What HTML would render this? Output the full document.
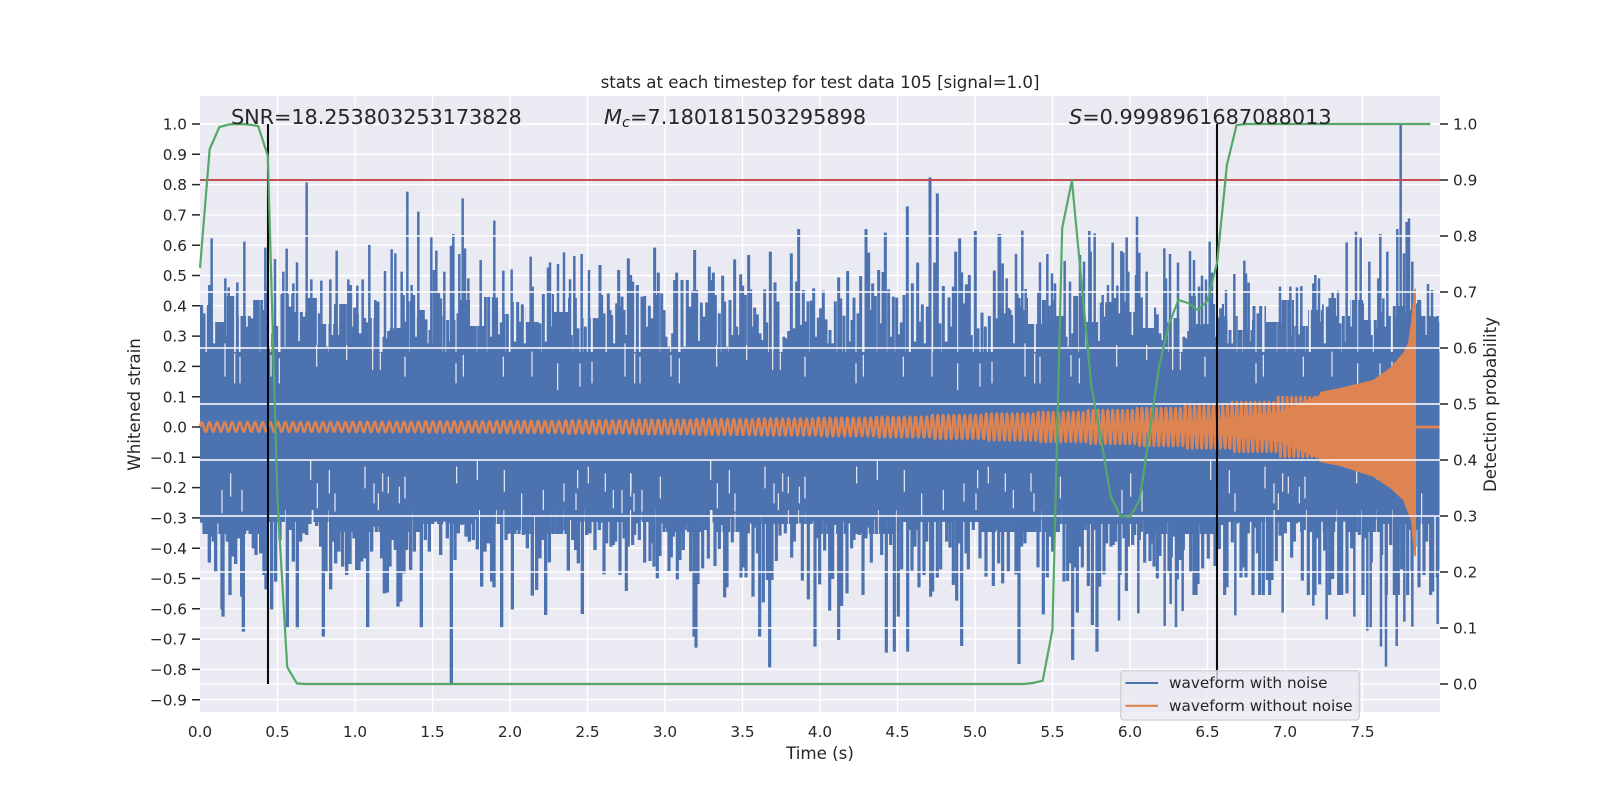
<!DOCTYPE html>
<html><head><meta charset="utf-8"><title>stats at each timestep</title>
<style>html,body{margin:0;padding:0;background:#fff}svg{display:block}text{font-family:"DejaVu Sans",sans-serif;fill:#262626}</style></head>
<body>
<svg width="1600" height="800" viewBox="0 0 1600 800" xmlns="http://www.w3.org/2000/svg">
<defs>
<clipPath id="ax"><rect x="200" y="96" width="1239.5" height="616"/></clipPath>
<clipPath id="ct1"><polygon points="200,500 200,305 212,305 212,322 226,322 226,296 238,296 238,316 252,316 252,300 266,300 266,326 280,326 280,294 292,294 292,312 306,312 306,298 320,298 320,324 334,324 334,304 348,304 348,292 362,292 362,318 374,318 374,300 388,300 388,328 402,328 402,295 416,295 416,310 430,310 430,293 444,293 444,320 456,320 456,300 470,300 470,326 484,326 484,297 498,297 498,314 512,314 512,302 526,302 526,322 540,322 540,294 554,294 554,312 568,312 568,298 582,298 582,318 600,318 600,500"/></clipPath>
<clipPath id="ct2"><polygon points="1000,500 1000,308 1014,308 1014,298 1028,298 1028,324 1042,324 1042,300 1056,300 1056,316 1070,316 1070,296 1084,296 1084,322 1098,322 1098,302 1112,302 1112,298 1126,298 1126,312 1140,312 1140,328 1154,328 1154,300 1168,300 1168,318 1182,318 1182,296 1196,296 1196,324 1210,324 1210,304 1224,304 1224,316 1238,316 1238,330 1252,330 1252,306 1266,306 1266,322 1280,322 1280,300 1294,300 1294,326 1308,326 1308,310 1322,310 1322,298 1336,298 1336,316 1350,316 1350,300 1364,300 1364,320 1378,320 1378,298 1392,298 1392,306 1406,306 1406,300 1420,300 1420,316 1440,316 1440,500"/></clipPath>
<clipPath id="cb2"><rect x="1100" y="440" width="340" height="155"/></clipPath>
<clipPath id="cf"><polygon points="200,440 1440,440 1440,524 1380,524 1380,532 1300,532 1300,522 1220,522 1220,534 1140,534 1140,524 1060,524 1060,532 980,532 980,522 900,522 900,534 820,534 820,524 740,524 740,532 660,532 660,522 580,522 580,534 500,534 500,524 420,524 420,532 340,532 340,522 260,522 260,534 200,534"/></clipPath>
<path id="w" fill="none" stroke="#dd8452" stroke-width="2.5" vector-effect="non-scaling-stroke" d="M0 0c.09-.6.16-1 .25-1s.16.4.25 1 .16 1 .25 1 .16-.4.25-1c.09-.6.16-1 .25-1s.16.4.25 1 .16 1 .25 1 .16-.4.25-1c.09-.6.16-1 .25-1s.16.4.25 1 .16 1 .25 1 .16-.4.25-1c.09-.6.16-1 .25-1s.16.4.25 1 .16 1 .25 1 .16-.4.25-1c.09-.6.16-1 .25-1s.16.4.25 1 .16 1 .25 1 .16-.4.25-1c.09-.6.16-1 .25-1s.16.4.25 1 .16 1 .25 1 .16-.4.25-1c.09-.6.16-1 .25-1s.16.4.25 1 .16 1 .25 1 .16-.4.25-1c.09-.6.16-1 .25-1s.16.4.25 1 .16 1 .25 1 .16-.4.25-1c.09-.6.16-1 .25-1s.16.4.25 1 .16 1 .25 1 .16-.4.25-1c.09-.6.16-1 .25-1s.16.4.25 1 .16 1 .25 1 .16-.4.25-1"/>
<path id="tt" transform="translate(600 170) scale(.33333)" fill="none" stroke="#4c72b0" stroke-width="9" d="M0 285V750M5 375V750M12 430V750M25 370V750M30 420V750M35 435V750M42 520V750M50 400V750M56 300V750M62 410V750M66 380V750M72 420V750M78 495V750M85 265V750M92 315V750M98 335V750M104 550V750M112 345V750M120 560V750M126 380V750M134 378V750M140 470V750M148 407V750M156 445V750M164 233V750M170 375V750M175 308V750M185 370V750M192 420V750M198 500V750M206 530V750M212 555V750M218 490V750M224 330V750M230 308V750M238 565V750M246 330V750M254 530V750M262 330V750M270 410V750M278 362V750M284 240V750M290 360V750M296 513V750M304 398V750M312 440V750M320 397V750M328 290V750M334 330V750M340 308V750M346 375V750M352 525V750M358 430V750M368 317V750M374 395V750M380 530V750M390 390V750M398 495V750M404 268V750M410 470V750M416 495V750M422 313V750M428 347V750M436 375V750M440 525V750M446 255V750M452 358V750M458 470V750M464 413V750M472 433V750M480 490V750M486 510V750M494 358V750M500 457V750M511 245V750M518 540V750M525 337V750M534 395V750M541 548V750M552 500V750M558 505V750M566 483V750M574 250V750M582 475V750M590 335V750M596 177V750M604 465V750M610 360V750M618 455V750M624 394V750M634 392V750M641 355V750M648 500V750M655 443V750M662 415V750M670 362V750M678 448V750M684 520V750M690 480V750M698 520V750M706 394V750M716 322V750M722 385V750M732 437V750M743 303V750M750 515V750M756 450V750M762 383V750M768 580V750M774 430V750M782 318V750M790 555V750M798 177V750M806 248V750M812 420V750M818 340V750M826 378V750M836 300V750M842 460V750M849 306V750M856 188V750M866 358V750M872 500V750M880 380V750M890 383V750M897 493V750M904 457V750M912 375V750M922 109V750M930 555V750M937 340V750M944 515V750M953 278V750M960 455V750M967 403V750M974 520V750M982 410V750M990 22V750M996 545V750M1004 278V750M1012 70V750M1020 460V750M1030 348V750M1038 515V750M1047 382V750M1054 470V750M1060 350V750M1067 245V750M1073 580V750M1079 205V750M1085 307V750M1092 400V750M1099 343V750M1108 315V750M1114 495V750M1126 183V750M1134 475V750M1146 428V750M1156 470V750M1168 438V750M1176 575V750M1183 302V750M1190 445V750M1197 192V750"/>
<path id="bt" transform="translate(600 480) scale(.33333)" fill="none" stroke="#4c72b0" stroke-width="9.5" d="M3-100V128M12-100V283M20-100V190M28-100V125M33-100V200M40-100V195M47-100V185M53-100V115M60-100V285M66-100V100M72-100V175M79-100V333M85-100V200M92-100V50M98-100V195M104-100V165M110-100V130M118-100V180M126-100V95M134-100V248M143-100V110M150-100V243M157-100V190M162-100V260M172-100V295M180-100V228M188-100V130M195-100V143M207-100V273M214-100V232M220-100V170M232-100V298M240-100V240M250-100V210M263-100V130M272-100V275M282-100V470M288-100V503M294-100V312M300-100V125M308-100V265M316-100V150M325-100V236M332-100V0M345-100V258M352-100V85M358-100V207M366-100V135M374-100V352M381-100V322M388-100V40M397-100V187M405-100V95M412-100V130M423-100V293M431-100V262M438-100V292M445-100V160M452-100V120M459-100V350M466-100V143M472-100V220M479-100V470M490-100V367M495-100V25M502-100V300M509-100V562M516-100V300M522-100V70M529-100V243M535-100V90M540-100V167M548-100V35M556-100V160M565-100V40M575-100V233M583-100V185M590-100V130M598-100V70M607-100V302M615-100V55M625-100V358M633-100V120M645-100V500M652-100V175M659-100V313M666-100V120M674-100V212M682-100V135M689-100V392M698-100V297M705-100V125M716-100V480M725-100V378M733-100V125M741-100V340M748-100V130M755-100V205M762-100V180M770-100V10M778-100V165M789-100V345M798-100V175M806-100V130M814-100V248M825-100V118M832-100V0M845-100V225M859-100V518M872-100V195M883-100V515M895-100V410M905-100V268M913-100V35M923-100V515M930-100V150M936-100V272M945-100V200M950-100V150M957-100V322M965-100V105M972-100V285M980-100V185M992-100V350M998-100V335M1005-100V110M1012-100V293M1022-100V268M1030-100V90M1040-100V185M1050-100V203M1060-100V315M1070-100V362M1078-100V190M1085-100V498M1092-100V65M1098-100V220M1105-100V268M1112-100V120M1120-100V150M1128-100V90M1133-100V25M1140-100V235M1148-100V120M1158-100V290M1165-100V10M1172-100V125M1180-100V318M1188-100V150M1196-100V250M1208-100V310M1216-100V35M1225-100V275M1232-100V125M1240-100V85M1248-100V283M1257-100V552M1265-100V200M1275-100V190M1285-100V155M1293-100V35M1302-100V95M1314-100V262M1320-100V120M1330-100V403M1342-100V292M1350-100V170M1358-100V215M1375-100V153M1381-100V55M1392-100V305M1403-100V303M1410-100V250M1418-100V540M1425-100V262M1432-100V397M1440-100V200M1447-100V262M1455-100V150M1465-100V318M1477-100V435M1485-100V150M1491-100V515M1499-100V320"/>
<path id="tc" transform="translate(600 170) scale(.33333)" fill="none" stroke="#eaeaf2" stroke-width="3.6" d="M75 520V620M104 550V640M120 560V640M213 555V620M238 565V640M350 525V590M440 525V570M518 540V600M541 548V600M615 560V620M768 580V640M790 555V620M910 560V620M996 545V620M1073 580V660M1140 580V650M1176 575V640"/>
<path id="bc" transform="translate(600 480) scale(.33333)" fill="none" stroke="#eaeaf2" stroke-width="3.6" d="M66 100V30M92 50V-20M126 95V30M332 0V-60M352 85V10M388 40V-30M405 95V40M495 25V-40M522 70V10M535 90V40M548 35V-20M565 40V-10M598 70V20M615 55V-10M770 10V-40M832 0V-60M913 35V-30M965 105V40M1030 90V30M1092 65V10M1128 90V40M1133 25V-30M1165 10V-40M1216 35V-20M1240 85V30M1293 35V-20M1302 95V40M1381 55V-10"/>
</defs>
<rect width="1600" height="800" fill="#fff"/>
<rect x="200" y="96" width="1240" height="616" fill="#eaeaf2"/>
<!-- left grid -->
<path fill="none" stroke="#fff" stroke-width="1.39" d="M200 124H1440M200 154.3H1440M200 184.6H1440M200 214.9H1440M200 245.2H1440M200 275.5H1440M200 305.8H1440M200 336.1H1440M200 366.4H1440M200 396.7H1440M200 427H1440M200 457.3H1440M200 487.6H1440M200 517.9H1440M200 548.2H1440M200 578.5H1440M200 608.8H1440M200 639.1H1440M200 669.4H1440M200 699.7H1440M277.5 96V712M355 96V712M432.5 96V712M510 96V712M587.5 96V712M665 96V712M742.5 96V712M820 96V712M897.5 96V712M975 96V712M1052.5 96V712M1130 96V712M1207.5 96V712M1285 96V712M1362.5 96V712"/>
<!-- blue waveform -->
<g clip-path="url(#ax)">
<rect x="200" y="352" width="1240" height="158" fill="#4c72b0"/>
<g clip-path="url(#cf)"><use href="#bt" transform="translate(-400 0)"/><use href="#bt" transform="translate(113 0)"/><use href="#bt" transform="translate(331 0)"/></g>
<use href="#tt"/>
<use href="#bt"/>
<g clip-path="url(#ct1)"><use href="#tt" transform="translate(-400 0)"/></g>
<g clip-path="url(#ct2)"><use href="#tt" transform="translate(400 0)"/><use href="#tt" transform="translate(800 0)"/></g>
<g clip-path="url(#cb2)"><use href="#bt" transform="translate(500 0)"/></g>
<path transform="translate(190 90) scale(.33333)" fill="none" stroke="#4c72b0" stroke-width="7.5" d="M58 585V900M65 445V900M106 565V900M116 592V900M142 577V900M163 455V900M226 473V900M232 600V900M255 507V900M280 545V900M290 476V900M310 580V900M321 517V900M350 277V900M364 568V900M394 572V900M421 568V900M440 482V900M475 568V900M482 585V900M502 587V900M518 568V900M538 465V900M585 543V900M605 478V900M616 490V900M635 545V900M652 305V900M665 585V900M685 365V900M724 442V900M732 540V900M739 482V900M763 545V900M783 467V900M790 432V900M808 492V900M818 325V900M825 475V900M835 565V900M872 510V900M913 392V900M940 542V900M965 538V900M1022 500V900M1028 590V900M1074 533V900M1080 517V900M1104 522V900M1122 487V900M1140 568V900M1153 498V900M1175 492V900M1197 540V900"/>
<path transform="translate(1000 90) scale(.33333)" fill="none" stroke="#4c72b0" stroke-width="7.5" d="M0 432V900M8 520V900M20 565V900M48 492V900M52 612V900M67 422V900M77 597V900M115 605V900M120 517V900M142 492V900M156 550V900M165 580V900M194 513V900M210 575V900M240 495V900M252 515V900M268 423V900M272 485V900M284 430V900M308 615V900M324 585V900M338 458V900M352 587V900M364 483V900M370 488V900M380 442V900M385 545V900M408 555V900M411 380V900M418 488V900M425 622V900M440 545V900M493 475V900M498 565V900M510 492V900M534 518V900M570 483V900M582 510V900M597 590V900M606 557V900M618 568V900M629 455V900M636 548V900M678 600V900M703 552V900M733 512V900M738 550V900M746 578V900M840 590V900M871 590V900M891 592V900M904 588V900M940 580V900M946 555V900M957 565V900M998 608V900M1014 602V900M1040 457V900M1068 425V900M1082 443V900M1108 515V900M1135 565V900M1141 432V900M1150 625V900M1162 485V900M1192 417V900M1202 104V900M1212 490V900M1220 396V900M1227 385V900M1237 515V900"/>
<path fill="none" stroke="#4c72b0" stroke-width="2.5" d="M1420 300V400M1424 340V400M1428 284V400M1432 290V400M1435 317V400M1438 322V400"/>
<path transform="translate(190 500) scale(.33333)" fill="none" stroke="#4c72b0" stroke-width="10" d="M38-60V68M45-60V20M52-60V75M58-60V188M64-60V110M70-60V125M77-60V218M83-60V70M96-60V328M99-60V350M106-60V70M112-60V125M120-60V285M128-60V170M137-60V192M147-60V115M155-60V290M160-60V395M172-60V92M180-60V60M190-60V145M198-60V165M212-60V160M222-60V225M228-60V268M240-60V50M245-60V328M257-60V245M270-60V120M280-60V60M292-60V382M300-60V90M310-60V185M322-60V387M332-60V125M340-60V100M350-60V105M360-60V72M368-60V20M380-60V78M392-60V140M400-60V410M408-60V215M422-60V268M430-60V125M437-60V190M447-60V155M458-60V200M470-60V225M480-60V192M492-60V115M500-60V210M507-60V210M515-60V185M525-60V175M533-60V382M545-60V155M555-60V80M565-60V80M575-60V175M583-60V280M592-60V278M600-60V200M608-60V120M616-60V150M624-60V320M632-60V305M642-60V220M650-60V150M662-60V210M673-60V155M682-60V80M694-60V385M706-60V120M718-60V155M728-60V20M740-60V65M752-60V165M762-60V50M772-60V115M784-60V551M795-60V180M805-60V100M816-60V75M828-60V110M838-60V125M850-60V120M862-60V148M875-60V260M885-60V155M895-60V130M905-60V245M912-60V262M925-60V10M935-60V382M948-60V120M958-60V100M967-60V328M978-60V85M988-60V90M1000-60V105M1012-60V145M1027-60V287M1040-60V270M1050-60V175M1060-60V120M1067-60V345M1078-60V187M1090-60V95M1110-60V95M1125-60V92M1135-60V212M1148-60V120M1157-60V150M1165-60V190M1177-60V342M1190-60V105M1200-60V100M1215-60V150M1228-60V90"/>
<path transform="translate(1050 600) scale(.33333)" fill="none" stroke="#4c72b0" stroke-width="7.5" d="M68-320V180M82-320V38M128-320V75M140-320V155M207-320V62M265-320V40M344-320V78M378-320V82M398-320V33M362-320V12M556-320V46M698-320V38M790-320V17M830-320V58M913-320V50M952-320V92M962-320V85M993-320V140M1008-320V200M1040-320V138M1063-320V65M1087-320V80M1163-320V72"/>
<use href="#tc"/><use href="#tc" transform="translate(-400 0)"/><use href="#tc" transform="translate(400 0)"/>
<use href="#bc"/><use href="#bc" transform="translate(-400 0)"/><use href="#bc" transform="translate(500 0)"/>
</g>
<!-- orange waveform -->
<polygon fill="#dd8452" points="1050,427 1150,422 1217,419 1280,412 1322,394 1322,460 1280,442 1217,435 1150,432"/>
<use href="#w" transform="translate(200 427) scale(7.6 4.7)"/>
<use href="#w" transform="translate(276 427) scale(7.5 4.9)"/>
<use href="#w" transform="translate(351 427) scale(7.3 5.2)"/>
<use href="#w" transform="translate(424 427) scale(7.1 5.6)"/>
<use href="#w" transform="translate(495 427) scale(6.9 6)"/>
<use href="#w" transform="translate(564 427) scale(6.7 6.6)"/>
<use href="#w" transform="translate(631 427) scale(6.4 7.2)"/>
<use href="#w" transform="translate(695 427) scale(6.2 7.9)"/>
<use href="#w" transform="translate(757 427) scale(6 8.6)"/>
<use href="#w" transform="translate(817 427) scale(5.8 9.4)"/>
<use href="#w" transform="translate(875 427) scale(5.6 10.4)"/>
<use href="#w" transform="translate(931 427) scale(5.4 12)"/>
<use href="#w" transform="translate(985 427) scale(5.2 13.5)"/>
<use href="#w" transform="translate(1037 427) scale(5 15)"/>
<use href="#w" transform="translate(1087 427) scale(4.9 17)"/>
<use href="#w" transform="translate(1136 427) scale(4.8 19)"/>
<use href="#w" transform="translate(1184 427) scale(4.7 21.5)"/>
<use href="#w" transform="translate(1231 427) scale(4.6 25)"/>
<use href="#w" transform="translate(1277 427) scale(4.5 30)"/>
<polygon fill="#dd8452" points="1320,392 1340,388 1373,380 1390,368 1403,353 1408,343 1411,323 1414,290 1416,288 1416,557 1414,555 1411,520 1408,513 1403,500 1390,488 1373,476.7 1340,466 1320,462"/>
<rect x="1416" y="425.6" width="23.5" height="2.8" fill="#dd8452"/>
<!-- right grid over data -->
<path fill="none" stroke="#fff" stroke-width="1.39" d="M200 124H1440M200 180H1440M200 236H1440M200 292H1440M200 348H1440M200 404H1440M200 460H1440M200 516H1440M200 572H1440M200 628H1440M200 684H1440"/>
<!-- threshold, probability, markers -->
<path d="M200 180H1440" stroke="#c44e52" stroke-width="2.08" fill="none"/>
<path d="M268 124V684M1217 124V684" stroke="#000" stroke-width="2.08" fill="none" opacity=".95"/>
<polyline fill="none" stroke="#55a868" stroke-width="2.2" stroke-linejoin="round" points="200,268 209.7,149 219.4,127 229,124.5 238.8,124 248.4,124.5 258.1,126 267.8,155.7 277.5,500 287.2,667 296.9,683.4 306,684 1023.4,684 1033,683 1042.7,680.7 1052.4,630 1062.2,228 1071.9,180.7 1081.6,283 1091.3,386 1101,439 1110.6,496 1120.3,516 1130,517 1139.7,500 1149.4,434 1159,367 1168.7,325 1178.4,300 1188,303 1197.8,310 1207.5,301 1217.2,262 1226.9,165 1236.6,125 1246.3,124 1430.3,124"/>
<!-- ticks -->
<path fill="none" stroke="#262626" stroke-width="1.5" d="M192 124h8M192 154.3h8M192 184.6h8M192 214.9h8M192 245.2h8M192 275.5h8M192 305.8h8M192 336.1h8M192 366.4h8M192 396.7h8M192 427h8M192 457.3h8M192 487.6h8M192 517.9h8M192 548.2h8M192 578.5h8M192 608.8h8M192 639.1h8M192 669.4h8M192 699.7h8M1440 124h8M1440 180h8M1440 236h8M1440 292h8M1440 348h8M1440 404h8M1440 460h8M1440 516h8M1440 572h8M1440 628h8M1440 684h8"/>
<!-- annotation text -->
<text x="231" y="124" font-size="20.83" letter-spacing="-.09">SNR=18.253803253173828</text>
<text x="604" y="124" font-size="20.83"><tspan font-style="italic">M</tspan><tspan font-style="italic" font-size="14.6" dy="3">c</tspan><tspan dy="-3">=7.180181503295898</tspan></text>
<text x="1069" y="124" font-size="20.83"><tspan font-style="italic">S</tspan>=0.9998961687088013</text>
<text x="820" y="88" font-size="16.67" text-anchor="middle" letter-spacing="-.03">stats at each timestep for test data 105 [signal=1.0]</text>
<!-- left tick labels -->
<g font-size="15.28" text-anchor="end">
<text x="187" y="129.6">1.0</text><text x="187" y="159.9">0.9</text><text x="187" y="190.2">0.8</text><text x="187" y="220.5">0.7</text><text x="187" y="250.8">0.6</text><text x="187" y="281.1">0.5</text><text x="187" y="311.4">0.4</text><text x="187" y="341.7">0.3</text><text x="187" y="372">0.2</text><text x="187" y="402.3">0.1</text><text x="187" y="432.6">0.0</text><text x="187" y="462.9">−0.1</text><text x="187" y="493.2">−0.2</text><text x="187" y="523.5">−0.3</text><text x="187" y="553.8">−0.4</text><text x="187" y="584.1">−0.5</text><text x="187" y="614.4">−0.6</text><text x="187" y="644.7">−0.7</text><text x="187" y="675">−0.8</text><text x="187" y="705.3">−0.9</text>
</g>
<!-- right tick labels -->
<g font-size="15.28">
<text x="1453" y="129.6">1.0</text><text x="1453" y="185.6">0.9</text><text x="1453" y="241.6">0.8</text><text x="1453" y="297.6">0.7</text><text x="1453" y="353.6">0.6</text><text x="1453" y="409.6">0.5</text><text x="1453" y="465.6">0.4</text><text x="1453" y="521.6">0.3</text><text x="1453" y="577.6">0.2</text><text x="1453" y="633.6">0.1</text><text x="1453" y="689.6">0.0</text>
</g>
<!-- bottom tick labels -->
<g font-size="15.28" text-anchor="middle">
<text x="200" y="737">0.0</text><text x="277.5" y="737">0.5</text><text x="355" y="737">1.0</text><text x="432.5" y="737">1.5</text><text x="510" y="737">2.0</text><text x="587.5" y="737">2.5</text><text x="665" y="737">3.0</text><text x="742.5" y="737">3.5</text><text x="820" y="737">4.0</text><text x="897.5" y="737">4.5</text><text x="975" y="737">5.0</text><text x="1052.5" y="737">5.5</text><text x="1130" y="737">6.0</text><text x="1207.5" y="737">6.5</text><text x="1285" y="737">7.0</text><text x="1362.5" y="737">7.5</text>
</g>
<text x="820" y="759" font-size="16.67" text-anchor="middle">Time (s)</text>
<text transform="translate(140 404.5) rotate(-90)" font-size="16.67" text-anchor="middle">Whitened strain</text>
<text transform="translate(1496 404.5) rotate(-90)" font-size="16.67" text-anchor="middle">Detection probability</text>
<!-- legend -->
<rect x="1120.7" y="670.7" width="238.6" height="49.4" rx="3.5" fill="#eaeaf2" fill-opacity=".8" stroke="#cccccc" stroke-opacity=".8" stroke-width="1.39"/>
<path d="M1125.5 683h32.5" stroke="#4c72b0" stroke-width="2.08" fill="none"/>
<path d="M1125.5 705.8h32.5" stroke="#dd8452" stroke-width="2.08" fill="none"/>
<text x="1169" y="688" font-size="15.28">waveform with noise</text>
<text x="1169" y="711" font-size="15.28">waveform without noise</text>
</svg>
</body></html>
